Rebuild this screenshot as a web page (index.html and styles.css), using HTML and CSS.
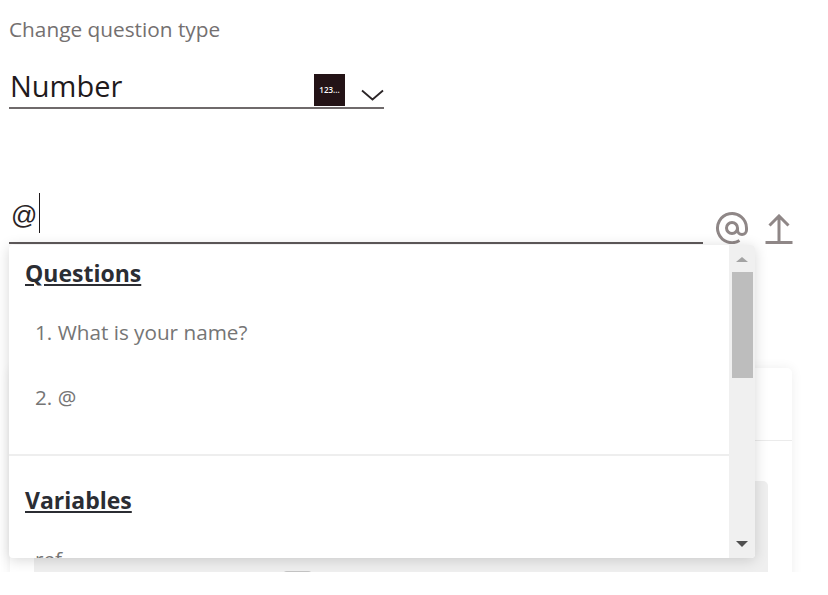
FILE: index.html
```html
<!DOCTYPE html>
<html>
<head>
    <title>Change question type</title>
    <link rel="stylesheet" href="styles.css">
</head>
<body>
    <div class="page">
        <div class="type-label">Change question type</div>

        <!-- Type select -->
        <div class="type-select">
            <span class="type-value">Number</span>
            <span class="type-icon">123...</span>
            <svg class="chevron" width="23" height="12" viewBox="0 0 23 12">
                <path d="M1 1.5 L11.5 10.5 L22 1.5" fill="none" stroke="#2b2527" stroke-width="1.8"/>
            </svg>
        </div>

        <!-- Question input -->
        <div class="question-row">
            <div class="question-field">
                <span class="question-text">@</span><span class="caret"></span>
            </div>
            <svg class="tool-icon at-icon" width="34" height="32" viewBox="0 0 34 32">
                <path d="M22.5 16 a5.5 5.5 0 1 1 -11 0 a5.5 5.5 0 1 1 11 0 v2 a4.5 4.5 0 0 0 9 0 v-2 a14.5 14.5 0 1 0 -7 12.5" fill="none" stroke="#8f8787" stroke-width="3"/>
            </svg>
            <svg class="tool-icon upload-icon" width="28" height="30" viewBox="0 0 28 30">
                <path d="M14 2 V27 M4.5 11.5 L14 2 L23.5 11.5 M0.5 28.5 H27.5" fill="none" stroke="#8f8787" stroke-width="3"/>
            </svg>

            <!-- Mention menu -->
            <div class="mention-menu">
                <div class="mention-list">
                    <div class="mention-group">
                        <h3>Questions</h3>
                        <div class="mention-item first">1. What is your name?</div>
                        <div class="mention-item">2. @</div>
                    </div>
                    <div class="mention-group">
                        <h3>Variables</h3>
                        <div class="mention-item first">ref</div>
                    </div>
                </div>
                <div class="scrollbar">
                    <span class="arrow-up"></span>
                    <span class="thumb"></span>
                    <span class="arrow-down"></span>
                </div>
            </div>
        </div>

        <!-- Card behind the menu -->
        <div class="card">
            <div class="card-head"></div>
            <div class="card-body">
                <div class="card-block"><span class="handle"></span></div>
            </div>
        </div>
    </div>
</body>
</html>
```

FILE: styles.css
```css
body {
    font-family: "Open Sans", "Noto Sans", sans-serif;
    background-color: #ffffff;
    margin: 0;
    padding: 0;
}

.page {
    height: 572px;
    overflow: hidden;
    padding: 16px 0 0 9px;
    box-sizing: border-box;
}

.type-label {
    font-size: 20.8px;
    line-height: 26px;
    color: #747070;
}

.type-select {
    display: flex;
    align-items: flex-end;
    width: 375px;
    height: 67px;
    box-sizing: border-box;
    border-bottom: 2px solid #6f6a6b;
}

.type-value {
    font-size: 29px;
    line-height: 42px;
    color: #1f1a1c;
    margin: 0 0 0 1px;
}

.type-icon {
    width: 31px;
    height: 32px;
    margin: 0 16px 1px auto;
    background-color: #231316;
    color: #ffffff;
    font-size: 8px;
    font-weight: 600;
    line-height: 32px;
    text-align: center;
}

.chevron {
    margin-bottom: 6px;
}

.question-row {
    position: relative;
    display: flex;
    align-items: flex-end;
    height: 135px;
    margin-right: 35px;
}

.question-field {
    flex: 1;
    display: flex;
    align-items: flex-start;
    height: 50px;
    border-bottom: 2px solid #5f5a5b;
}

.question-text {
    font-family: "Liberation Sans", sans-serif;
    font-size: 26px;
    line-height: 30px;
    color: #2a2426;
    margin: 8px 0 0 2px;
}

.caret {
    width: 1px;
    height: 40px;
    margin: 1px 0 0 2px;
    background-color: #1f1a1c;
}

.at-icon {
    margin-left: 12px;
}

.upload-icon {
    margin-left: 16px;
}

.mention-menu {
    position: absolute;
    top: 100%;
    left: 0;
    display: flex;
    width: 746px;
    height: 313px;
    margin-top: 1px;
    background-color: #ffffff;
    border-radius: 4px;
    box-shadow: 0 2px 14px rgba(0, 0, 0, 0.16);
    overflow: hidden;
}

.mention-list {
    flex: 1;
    overflow: hidden;
}

.mention-group {
    padding: 0 16px;
    border-bottom: 2px solid #eeeeee;
}

.mention-group h3 {
    margin: 0;
    padding-top: 12px;
    font-size: 23px;
    line-height: 32px;
    font-weight: 700;
    text-decoration: underline;
    color: #2b2d33;
}

.mention-group + .mention-group {
    border-bottom: none;
    padding-top: 16px;
}

.mention-item {
    margin: 0 0 0 10px;
    padding-top: 33px;
    font-size: 20.7px;
    line-height: 32px;
    color: #757575;
}

.mention-item.first {
    padding-top: 27px;
}

.mention-group .mention-item:last-child {
    padding-bottom: 41px;
}

.scrollbar {
    display: flex;
    flex-direction: column;
    align-items: center;
    width: 26px;
    background-color: #f0f0f0;
}

.arrow-up {
    width: 0;
    height: 0;
    margin-top: 12px;
    border-left: 6px solid transparent;
    border-right: 6px solid transparent;
    border-bottom: 5px solid #a3a3a3;
}

.thumb {
    width: 21px;
    height: 106px;
    margin-top: 10px;
    background-color: #bdbdbd;
}

.arrow-down {
    width: 0;
    height: 0;
    margin-top: auto;
    margin-bottom: 11px;
    border-left: 6px solid transparent;
    border-right: 6px solid transparent;
    border-top: 6px solid #505050;
}

.card {
    width: 782px;
    height: 300px;
    margin: 124px 0 0 1px;
    background-color: #ffffff;
    border-radius: 5px;
    box-shadow: 0 0 12px rgba(0, 0, 0, 0.07);
}

.card-head {
    height: 72px;
    border-bottom: 1px solid #ebebeb;
}

.card-body {
    padding: 40px 24px 0;
}

.card-block {
    height: 200px;
    background-color: #efefef;
    border-radius: 5px;
    padding: 90px 0 0 249px;
}

.handle {
    display: block;
    width: 29px;
    height: 8px;
    background-color: #c4c4c4;
    border-radius: 4px;
}
```
